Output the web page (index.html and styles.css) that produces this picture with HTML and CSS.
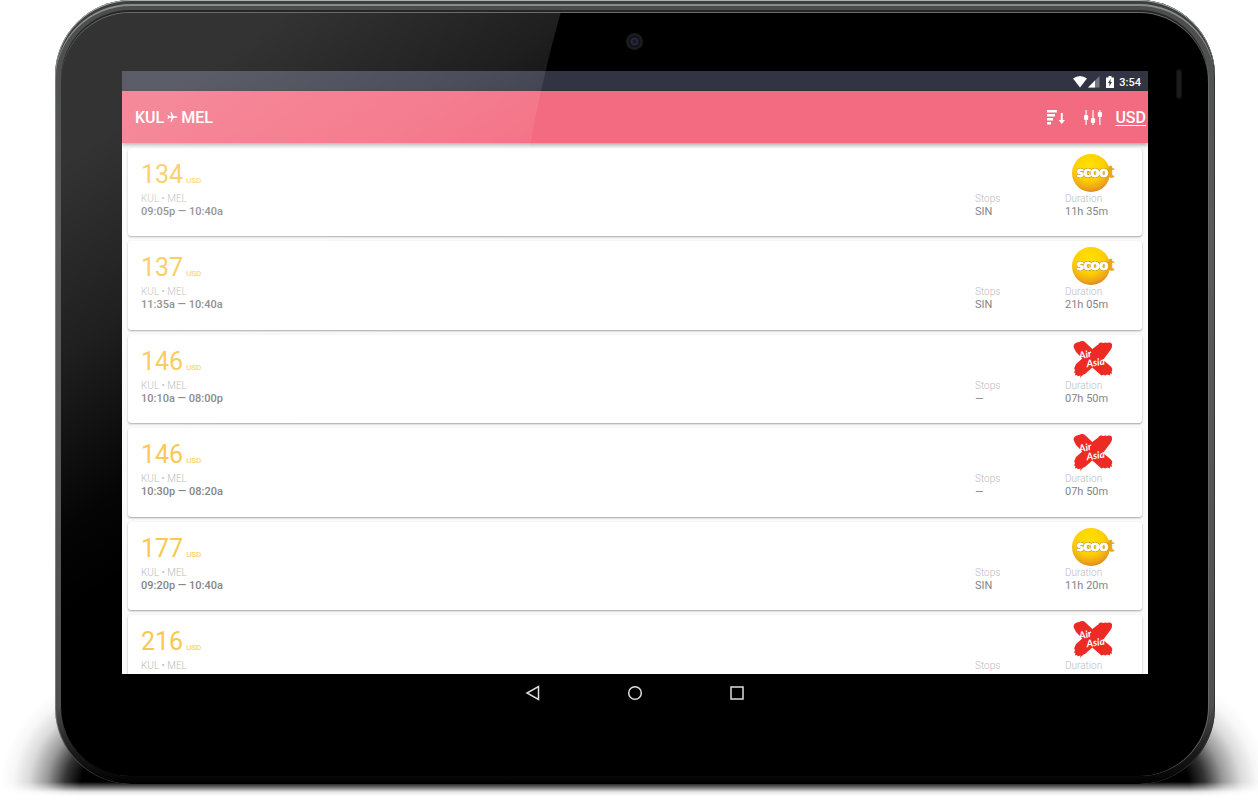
FILE: index.html
```html
<!DOCTYPE html>
<html lang="en">
<head>
    <meta charset="UTF-8">
    <meta name="viewport" content="width=device-width, initial-scale=1.0">
    <title>KUL - MEL flights</title>
    <link rel="stylesheet" href="styles.css">
</head>
<body>
    <!-- airline logos, reused by the cards -->
    <svg class="defs" width="0" height="0" aria-hidden="true">
        <defs>
            <radialGradient id="ball" cx="45%" cy="30%" r="72%">
                <stop offset="0" stop-color="#ffe100"/>
                <stop offset="0.55" stop-color="#fdd000"/>
                <stop offset="0.85" stop-color="#eda41a"/>
                <stop offset="1" stop-color="#dc8220"/>
            </radialGradient>
        </defs>
        <symbol id="scoot" viewBox="0 0 46 40">
            <circle cx="20" cy="20" r="19" fill="url(#ball)"/>
            <g font-family="Lato, sans-serif" font-weight="900" font-size="15" stroke-linejoin="round">
                <text x="37" y="24" fill="#e9a813" stroke="#e9a813" stroke-width="1.500">t</text>
                <text x="6" y="24" fill="#fff" stroke="#c9961e" stroke-width="2.200" paint-order="stroke">scoo</text>
                <text x="6" y="24" fill="#fff" stroke="#fff" stroke-width="0.8">scoo</text>
            </g>
            <path d="M41 17.500l2.500.5M41.500 21.500l2 .5" stroke="#fff" stroke-width="1.300"/>
        </symbol>
        <symbol id="airasia" viewBox="0 0 46 40">
            <path fill="#ee2a24" d="M3 8C1.500 4 5 2.500 8 2c2-1.500 5-1.500 6.500.5L21.300 9l6-4.600c1-2 3-2.400 5-1.400l2-.6 2 .6c2-1 4-.4 4.700 1.200.6 3-1 5-2.400 7L32 20l5.600 4.600c2 1.600 3.400 3 3.800 5l-.8 2 .4 2.200-1.800-.2-.6 1.800-2.400-.8-1.800 1-2-.8-2 .8-9.100-8L14 34l-2 .8-3 3.200.6-2.600-2.600.8L5.600 35l-1.800.4.6-2.200-1.400-1 1-1.600-.8-2.400L5 24l6.300-5.500L5 12z"/>
            <g fill="#fff" font-family="Lato, sans-serif" font-weight="700" font-style="italic">
                <text transform="rotate(-12 10 20)" x="9" y="19" font-size="10">Air</text>
                <text transform="rotate(-8 17 27)" x="16" y="27" font-size="10">Asia</text>
            </g>
        </symbol>
    </svg>

    <div class="device">
        <div class="shadow"></div>
        <div class="rim">
            <div class="glass">
                <div class="camera"></div>
                <div class="sensor"></div>

                <div class="screen">
                    <div class="status-bar">
                        <svg width="14" height="12" viewBox="0 0 14 12" aria-hidden="true"><path d="M0 2.500Q7-2.500 14 2.500L7 11.500z" fill="#fff"/></svg>
                        <svg class="signal" width="12" height="12" viewBox="0 0 12 12" aria-hidden="true"><path d="M11.500 0v11.500H0z" fill="#777884"/><path d="M7 4.500v7H0z" fill="#fff"/></svg>
                        <svg class="battery" width="8" height="12" viewBox="0 0 8 12" aria-hidden="true"><path d="M0 1.500h2.500V0h3v1.500H8V12H0z" fill="#fff"/><path d="M4.800 2.800L2 7h1.600l-.6 3.500L6 6H4.400z" fill="#323443"/></svg>
                        <span>3:54</span>
                    </div>

                    <header class="app-bar">
                        <h1>KUL
                            <svg width="11" height="12" viewBox="0 0 11 12" role="img" aria-label="to"><path d="M10.500 6c0-.5-.6-.7-1.200-.7H6.700L4.300 1h-.9l1.200 4.300H2.200L1.200 4H.5l.5 2-.5 2h.7l1-1.300h2.400L3.400 11h.9l2.400-4.300h2.600c.6 0 1.200-.2 1.200-.7z" fill="#fff"/></svg>
                            MEL</h1>
                        <button type="button" aria-label="Sort">
                            <svg width="18" height="15" viewBox="0 0 18 15"><path d="M0 0h10v2.500H0zM0 4h8v2.500H0zM0 8h6v2.500H0zM0 12h4v2.500H0zM13.800 3h2v7h2.200l-3.200 4-3.200-4h2.200z" fill="#fff"/></svg>
                        </button>
                        <button type="button" aria-label="Filter">
                            <svg width="18" height="15" viewBox="0 0 18 15"><path d="M1.500 0h1.200v15H1.500zM8.400 0h1.200v15H8.400zM15.300 0h1.200v15h-1.200z" fill="#fff"/><rect y="5" width="4.200" height="5" rx="1" fill="#fff"/><rect x="6.900" y="8" width="4.200" height="5" rx="1" fill="#fff"/><rect x="13.800" y="2" width="4.200" height="5" rx="1" fill="#fff"/></svg>
                        </button>
                        <a class="currency" href="#currency">USD</a>
                    </header>

                    <main class="results">
                        <ul>
                            <li class="card">
                                <p class="price">134 <small>USD</small></p>
                                <svg class="logo" role="img" aria-label="Scoot"><use href="#scoot"/></svg>
                                <div class="info times"><span>KUL • MEL</span><b>09:05p — 10:40a</b></div>
                                <div class="info"><span>Stops</span><b>SIN</b></div>
                                <div class="info"><span>Duration</span><b>11h 35m</b></div>
                            </li>
                            <li class="card">
                                <p class="price">137 <small>USD</small></p>
                                <svg class="logo" role="img" aria-label="Scoot"><use href="#scoot"/></svg>
                                <div class="info times"><span>KUL • MEL</span><b>11:35a — 10:40a</b></div>
                                <div class="info"><span>Stops</span><b>SIN</b></div>
                                <div class="info"><span>Duration</span><b>21h 05m</b></div>
                            </li>
                            <li class="card">
                                <p class="price">146 <small>USD</small></p>
                                <svg class="logo" role="img" aria-label="AirAsia X"><use href="#airasia"/></svg>
                                <div class="info times"><span>KUL • MEL</span><b>10:10a — 08:00p</b></div>
                                <div class="info"><span>Stops</span><b>—</b></div>
                                <div class="info"><span>Duration</span><b>07h 50m</b></div>
                            </li>
                            <li class="card">
                                <p class="price">146 <small>USD</small></p>
                                <svg class="logo" role="img" aria-label="AirAsia X"><use href="#airasia"/></svg>
                                <div class="info times"><span>KUL • MEL</span><b>10:30p — 08:20a</b></div>
                                <div class="info"><span>Stops</span><b>—</b></div>
                                <div class="info"><span>Duration</span><b>07h 50m</b></div>
                            </li>
                            <li class="card">
                                <p class="price">177 <small>USD</small></p>
                                <svg class="logo" role="img" aria-label="Scoot"><use href="#scoot"/></svg>
                                <div class="info times"><span>KUL • MEL</span><b>09:20p — 10:40a</b></div>
                                <div class="info"><span>Stops</span><b>SIN</b></div>
                                <div class="info"><span>Duration</span><b>11h 20m</b></div>
                            </li>
                            <li class="card">
                                <p class="price">216 <small>USD</small></p>
                                <svg class="logo" role="img" aria-label="AirAsia X"><use href="#airasia"/></svg>
                                <div class="info times"><span>KUL • MEL</span><b>01:40p — 10:50a</b></div>
                                <div class="info"><span>Stops</span><b>SYD</b></div>
                                <div class="info"><span>Duration</span><b>18h 10m</b></div>
                            </li>
                        </ul>
                    </main>
                </div>

                <nav class="nav-bar">
                    <button type="button" aria-label="Back"><svg width="16" height="16" viewBox="0 0 16 16"><path d="M13.500 1.500v13L2 8z"/></svg></button>
                    <button type="button" aria-label="Home"><svg width="16" height="16" viewBox="0 0 16 16"><circle cx="8" cy="8" r="6.300"/></svg></button>
                    <button type="button" aria-label="Recent apps"><svg width="16" height="16" viewBox="0 0 16 16"><rect x="2" y="2" width="12" height="12"/></svg></button>
                </nav>

                <div class="gloss"></div>
            </div>
        </div>
    </div>
</body>
</html>
```

FILE: styles.css
```css
* {
    box-sizing: border-box;
}
html {
    height: 100%;
}
body {
    min-height: 100%;
    margin: 0;
    padding: 0 43px 0 55px;
    font-family: Roboto, sans-serif;
    background: #fff;
    overflow: hidden;
}
button {
    padding: 0;
    background: none;
    border: none;
    cursor: pointer;
}
svg {
    display: block;
}
.defs {
    position: absolute;
}

/* tablet body */
.device {
    position: relative;
    display: flex;
    height: calc(100vh - 16px);
}
.shadow {
    position: absolute;
    left: -55px;
    right: -43px;
    bottom: -12px;
    height: 120px;
    background:
        radial-gradient(ellipse 130px 118px at 130px 112px, #000 38%, rgba(0, 0, 0, 0.8) 50%, rgba(0, 0, 0, 0.4) 64%, rgba(0, 0, 0, 0.14) 78%, rgba(0, 0, 0, 0.03) 90%, transparent),
        radial-gradient(ellipse 130px 118px at calc(100% - 118px) 112px, #000 38%, rgba(0, 0, 0, 0.8) 50%, rgba(0, 0, 0, 0.4) 64%, rgba(0, 0, 0, 0.14) 78%, rgba(0, 0, 0, 0.03) 90%, transparent),
        linear-gradient(#000, #000) 130px 0 / calc(100% - 248px) 100% no-repeat;
    -webkit-mask-image: linear-gradient(#000 calc(100% - 14px), rgba(0, 0, 0, 0.5) calc(100% - 8px), rgba(0, 0, 0, 0.1) calc(100% - 4px), transparent);
    mask-image: linear-gradient(#000 calc(100% - 14px), rgba(0, 0, 0, 0.5) calc(100% - 8px), rgba(0, 0, 0, 0.1) calc(100% - 4px), transparent);
}
.rim {
    position: relative;
    display: flex;
    flex: 1;
    padding: 13px 7px 8px 6px;
    border-radius: 76px;
    background: linear-gradient(#4b4d4c, #5a5a5a 30%, #4f4f4f 90%, #1a1a1a 96%, #000);
    box-shadow: inset 0 1px 0 #aab0ad, inset 1px 0 0 rgba(255, 255, 255, 0.25), inset -1px 0 0 #333, inset 0 4px 0 #3c403e, inset 0 6px 0 #8a8c8b;
}
.glass {
    position: relative;
    display: flex;
    flex-direction: column;
    flex: 1;
    padding: 58px 60px 0 61px;
    border-radius: 69px;
    background: #000;
    box-shadow: 0 -1px 0 #6b6b6b, 0 -3px 0 #262626, 1px 0 0 #666;
    overflow: hidden;
}
.camera {
    position: absolute;
    top: 20px;
    left: 50%;
    width: 17px;
    height: 17px;
    margin-left: -9px;
    border-radius: 50%;
    background: radial-gradient(circle, #15152b 1px, #28283f 3px, #101014 5px, #1b1b1b 6px, #1b1b1b);
}
.sensor {
    position: absolute;
    top: 56px;
    right: 26px;
    width: 6px;
    height: 30px;
    border-radius: 3px;
    background: #1c1c1c;
    border: 1px solid #0e0e0e;
}
.gloss {
    position: absolute;
    top: 0;
    left: 0;
    width: 44%;
    height: 620px;
    background: linear-gradient(146deg, rgba(255, 255, 255, 0.2) 16%, rgba(255, 255, 255, 0.12) 36%, rgba(255, 255, 255, 0.02) 54%, transparent 63%);
    clip-path: polygon(0 0, 99% 0, 97% 6%, 95% 13%, 93% 21%, 91% 32%, 89% 46%, 87% 100%, 0 100%);
    pointer-events: none;
}

/* screen */
.screen {
    display: flex;
    flex-direction: column;
    flex: 1;
    min-height: 0;
    overflow: hidden;
    background: #fafafa;
}
.status-bar {
    display: flex;
    align-items: center;
    justify-content: flex-end;
    height: 20px;
    padding: 2px 7px 0 0;
    background: #323443;
    color: #fff;
    font-size: 11px;
    font-weight: 500;
}
.signal {
    margin-left: 1px;
}
.battery {
    margin: 0 5px 0 6px;
}
.app-bar {
    position: relative;
    display: flex;
    align-items: center;
    gap: 19px;
    height: 52px;
    padding: 0 2px 0 13px;
    background: #f36b80;
    color: #fff;
    box-shadow: 0 2px 4px rgba(0, 0, 0, 0.35);
}
.app-bar h1 {
    display: flex;
    align-items: center;
    gap: 3px;
    flex: 1;
    margin: 0;
    font-size: 16px;
    font-weight: 500;
}
.currency {
    margin-left: -6px;
    color: #fff;
    font-size: 16px;
    font-weight: 500;
    text-underline-offset: 2px;
}
.results {
    flex: 1;
    min-height: 0;
}
.results ul {
    display: grid;
    grid-auto-rows: 1fr;
    gap: 5px;
    height: 106%;
    margin: 0;
    padding: 5px 6px 2px;
    list-style: none;
}
.card {
    display: grid;
    grid-template-columns: 1fr 90px 57px;
    grid-template-rows: 40px auto;
    align-content: start;
    padding: 5px 20px 0 13px;
    border-radius: 3px;
    background: #fff;
    box-shadow: 0 1px 2px rgba(0, 0, 0, 0.35);
}
.price {
    display: flex;
    align-items: baseline;
    gap: 3px;
    grid-column: 1 / 3;
    margin: 0;
    color: #f9c851;
    font-size: 25px;
    line-height: 44px;
}
.price small {
    font-size: 8px;
    line-height: 10px;
}
.logo {
    width: 46px;
    height: 40px;
    margin-left: 6px;
}
.info span,
.info b {
    display: block;
}
.info span {
    color: #bbb;
    font-size: 10px;
    font-weight: 300;
    line-height: 12px;
}
.info b {
    color: #858585;
    font-size: 11px;
    font-weight: 400;
    line-height: 13px;
}
.times b {
    font-weight: 500;
}

/* android buttons */
.nav-bar {
    display: flex;
    justify-content: center;
    gap: 86px;
    padding: 11px 0 75px;
}
.nav-bar svg {
    fill: none;
    stroke: #ddd;
    stroke-width: 1.5;
}
```
